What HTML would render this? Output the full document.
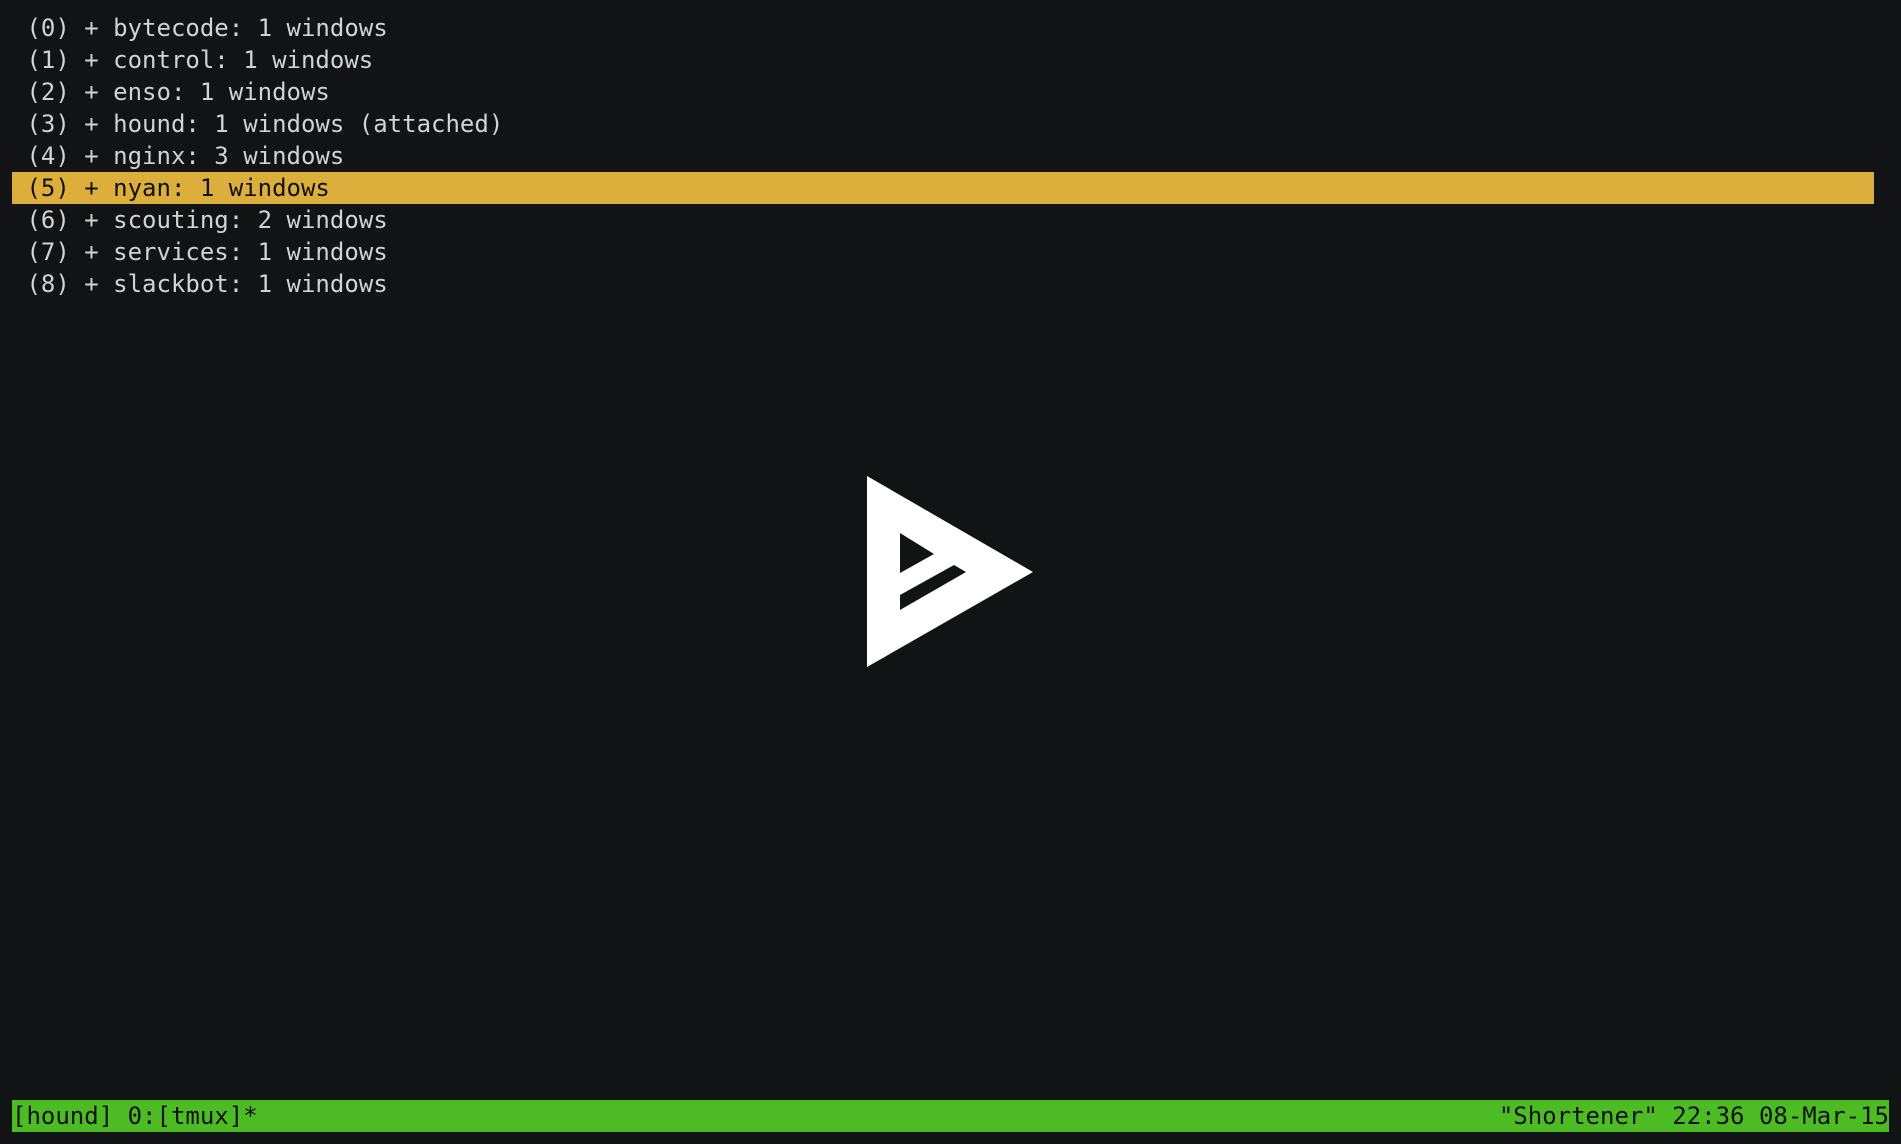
<!DOCTYPE html>
<html><head><meta charset="utf-8"><style>
html,body{margin:0;padding:0;width:1901px;height:1144px;background:#121315;overflow:hidden}
.t{position:absolute;left:12px;font-family:"DejaVu Sans Mono","Liberation Mono",monospace;font-size:24px;line-height:32px;height:32px;white-space:pre;color:#d2d2d2}
.hl{background:#dcae3c;color:#111;width:1862px}
.sb{background:#4cbb24;color:#111;width:1877px;top:1100px}
.r{position:absolute;right:0;top:0}
</style></head><body>
<div class="t" style="top:12px"> (0) + bytecode: 1 windows</div>
<div class="t" style="top:44px"> (1) + control: 1 windows</div>
<div class="t" style="top:76px"> (2) + enso: 1 windows</div>
<div class="t" style="top:108px"> (3) + hound: 1 windows (attached)</div>
<div class="t" style="top:140px"> (4) + nginx: 3 windows</div>
<div class="t hl" style="top:172px"> (5) + nyan: 1 windows</div>
<div class="t" style="top:204px"> (6) + scouting: 2 windows</div>
<div class="t" style="top:236px"> (7) + services: 1 windows</div>
<div class="t" style="top:268px"> (8) + slackbot: 1 windows</div>
<div class="t sb">[hound] 0:[tmux]*<span class="r">"Shortener" 22:36 08-Mar-15</span></div>
<svg style="position:absolute;left:0;top:0" width="1901" height="1144">
<polygon points="867,476 1033,572 867,667" fill="#fff"/>
<polygon points="900,533 934,554 900,573" fill="#121315"/>
<polygon points="900,595 954,565 966,572 900,610" fill="#121315"/>
</svg>
</body></html>
